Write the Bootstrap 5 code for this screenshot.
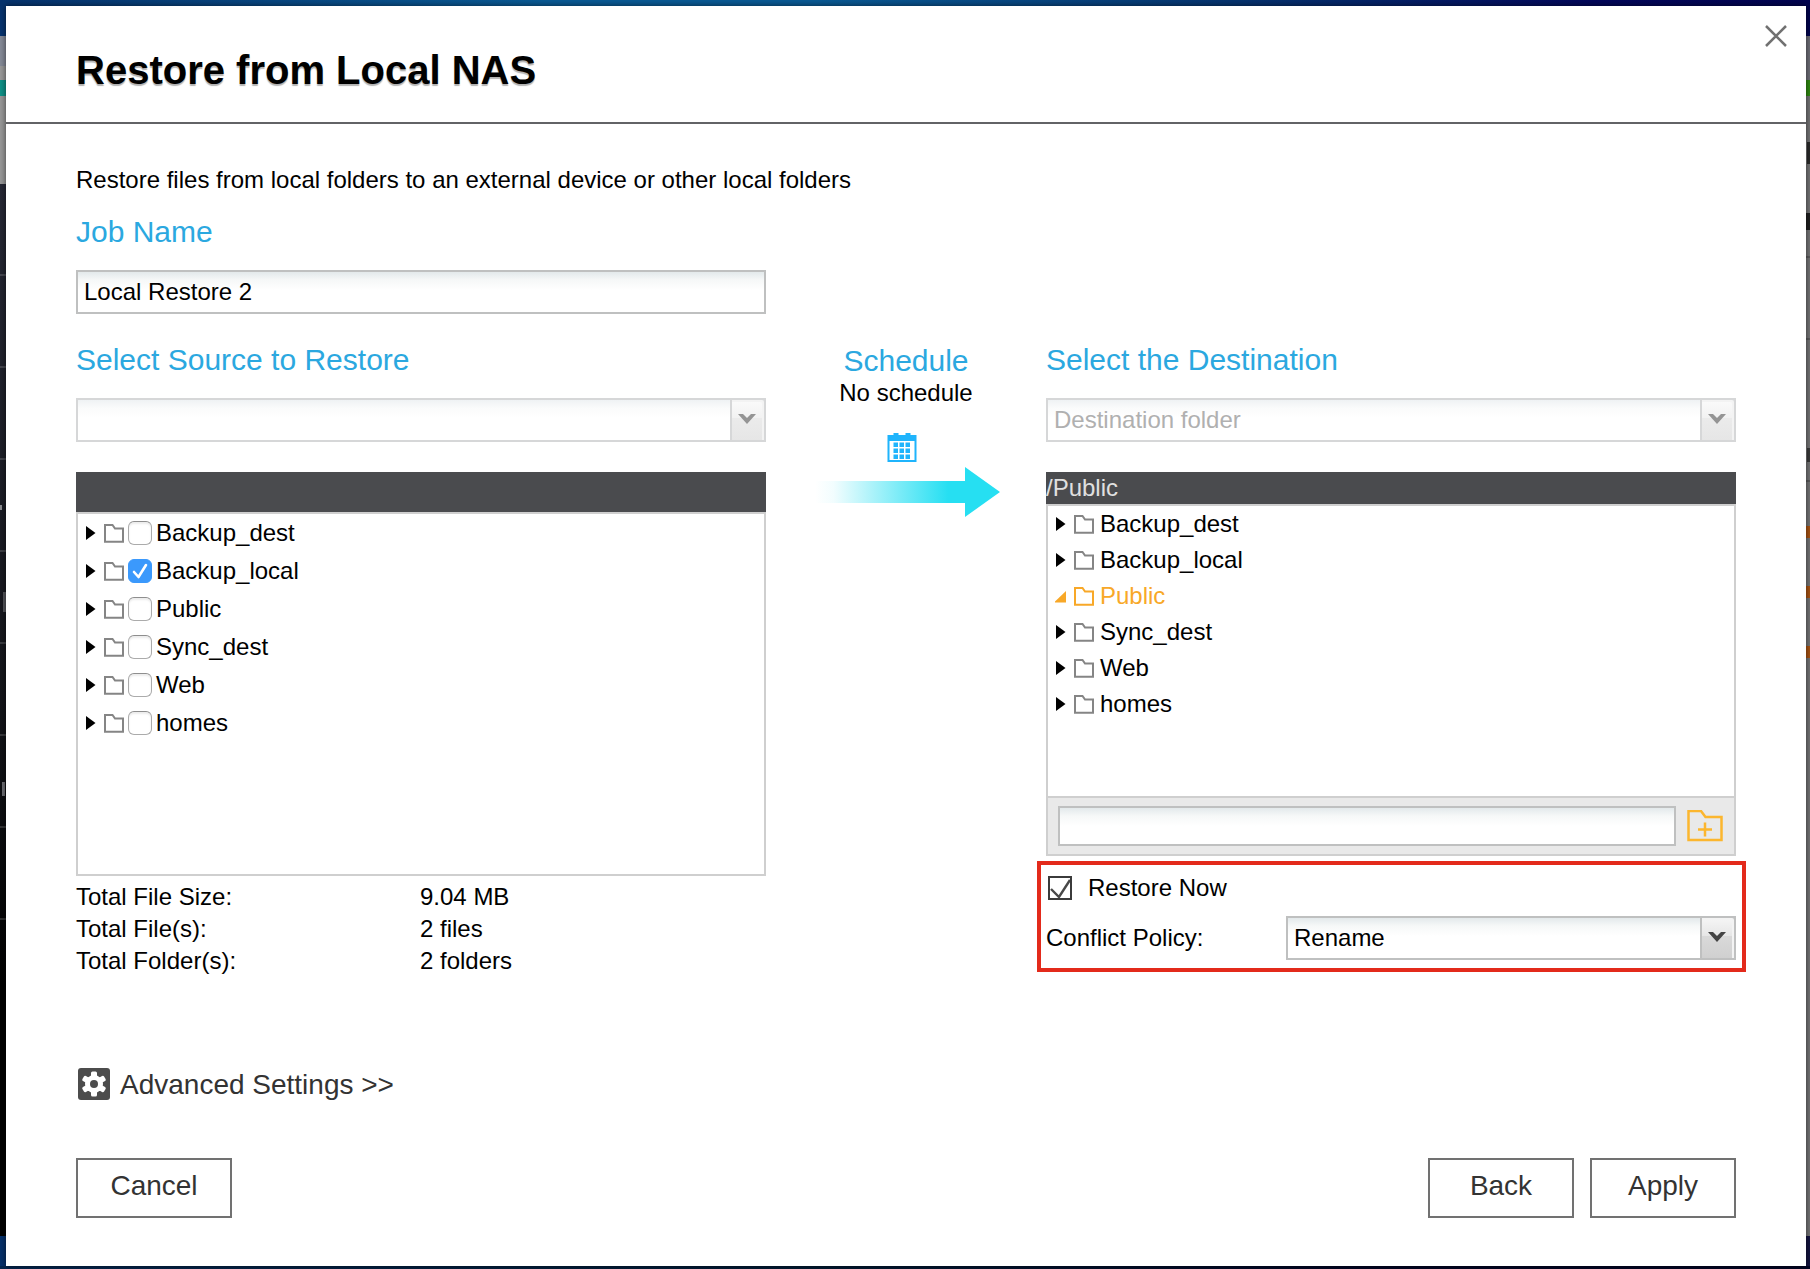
<!DOCTYPE html>
<html lang="en">
<head>
<meta charset="utf-8">
<meta name="viewport" content="width=device-width, initial-scale=1">
<title>Restore from Local NAS</title>
<link rel="stylesheet" href="https://cdn.jsdelivr.net/npm/bootstrap@5.3.0/dist/css/bootstrap.min.css">
<style>
  :root { --accent: #2ba8e0; --edge: #cfcfcf; --field-edge: #bfc0c0; --orange: #f8a828; }
  body {
    font-family: "Liberation Sans", Arial, sans-serif;
    font-size: 24px; line-height: 32px; color: #000;
    min-height: 100vh; padding: 6px 4px 3px 6px;
    background:
      linear-gradient(90deg, #06336d, #0a5a94 30%, #0a5a94 45%, #06346f 68%, #03075a 88%, #020450) top / 100% 6px no-repeat,
      linear-gradient(90deg, #05264f, #021a33 45%, #020524 75%) bottom / 100% 3px no-repeat,
      linear-gradient(#8a8b90, #8a8b90) left 0 top 505px / 2px 5px no-repeat,
      linear-gradient(#55565c, #55565c) left 3px top 592px / 3px 20px no-repeat,
      linear-gradient(#6d6e74, #6d6e74) left 2px top 782px / 3px 14px no-repeat,
      linear-gradient(#2a2a2a, #2a2a2a) right 0 top 142px / 3px 22px no-repeat,
      linear-gradient(#1f1f1f, #1f1f1f) right 0 top 213px / 4px 17px no-repeat,
      linear-gradient(#3a3a3a, #3a3a3a) right 0 top 448px / 3px 14px no-repeat,
      repeating-linear-gradient(transparent 0 90px, rgba(255,255,255,.16) 90px 92px) left 0 top 184px / 6px 740px no-repeat,
      linear-gradient(#07346f 0 36px, #858a97 36px 66px, #999 66px 80px, #0f9187 80px 96px, #979797 96px 184px, #262835 184px, #14151a 700px, #000 1000px 1236px, #06306a 1236px) left / 6px 100% no-repeat,
      linear-gradient(#02044e 0 36px, #6d6d76 36px 80px, #2f8a10 80px 96px, #747475 96px 256px, #5a5a5b 256px 258px, #747475 258px 338px, #5a5a5b 338px 340px, #747475 340px 480px, #5a5a5b 480px 482px, #747475 482px 526px, #a85312 526px 538px, #747475 538px 586px, #a85312 586px 598px, #747475 598px 646px, #a85312 646px 658px, #747475 658px 1236px, #14143f 1236px) right / 4px 100% no-repeat,
      #041c40;
  }
  .dialog { min-height: calc(100vh - 9px); background: #fff; box-shadow: 0 0 6px rgba(0,0,0,.6); }
  .dialog-head { padding: 42px 70px 30px; border-bottom: 2px solid #626366; }
  .dialog-title { font-size: 40px; line-height: 44px; font-weight: 700; margin: 0; text-shadow: 0 2px 1px rgba(0,0,0,.3); }
  .close-btn { top: 18px; right: 18px; width: 24px; height: 24px; line-height: 0; }
  .dialog-body { padding: 40px 70px 48px; }
  .job-row { padding-top: 18px; }
  .section-title { font-size: 30px; line-height: 36px; font-weight: 400; color: var(--accent); margin: 0 0 20px; display: block; }
  .side-col { flex: 69 1 0; min-width: 0; }
  .mid-col { flex: 28 0 0; padding-top: 3px; }
  .mid-col .section-title { line-height: 32px; margin: 0; }
  .field, .field:focus {
    font-size: 24px; line-height: 32px; height: 44px; padding: 4px 6px; color: #000;
    border: 2px solid var(--field-edge); border-radius: 0; box-shadow: none;
    background: linear-gradient(#e3e9eb, #f6f8f8 8px, #fff 18px);
  }
  .picker select { appearance: none; width: 100%; display: block; }
  .picker select:disabled { border-color: #d6d7d8; color: #b0b0b0; opacity: 1; background: linear-gradient(#eff2f4, #fafbfb 8px, #fff 18px); }
  .picker-arrow {
    top: 0; right: 0; bottom: 0; width: 36px; padding: 0 2px 3px 0; pointer-events: none;
    border: 2px solid var(--field-edge); border-top-right-radius: 4px; color: #444;
    background: linear-gradient(#f6f6f6, #e6e6e6 45%, #d9d9d9 46%, #d0d0d0);
    box-shadow: inset -2px 2px 0 #f3f3f3;
  }
  .picker.is-off .picker-arrow { border-color: #d6d7d8; color: #949494; background: linear-gradient(#fbfbfb, #f2f2f2 45%, #ebebeb 46%, #e6e6e6); }
  .path-bar { background: #4a4b4e; color: #e0e0e0; min-height: 32px; margin-top: 30px; }
  .path-bar.tall { min-height: 40px; }
  .tree { border: 2px solid var(--edge); padding: 0 7px; list-style: none; margin: 0; min-height: 364px; }
  .tree li { height: 38px; }
  .tree label { gap: 4px; }
  .tree label .twist { margin-right: 4px; }
  .tree.compact { min-height: 292px; border-bottom: 0; }
  .tree.compact li { height: 36px; }
  .tree.compact button { font-size: 24px; line-height: 32px; color: #000; }
  .tree.compact .twist { margin-right: 8px; }
  .tree.compact .folder { margin-right: 6px; }
  .tree.compact .picked { color: var(--orange); }
  .folder { color: #858585; }
  .picked .folder { color: var(--orange); }
  .mac-check { appearance: none; width: 24px; height: 24px; margin: 0; border: 1px solid #ababab; border-top-color: #8e8e8e; border-radius: 6px; background: #fff; box-shadow: inset 0 2px 2px #ececec; }
  .mac-check:checked { border-color: #3b99fc; box-shadow: none;
    background: #3b99fc url("data:image/svg+xml,%3Csvg xmlns='http://www.w3.org/2000/svg' viewBox='0 0 22 22'%3E%3Cpath d='M5 12l4.500 5L17 5' fill='none' stroke='white' stroke-width='2.600' stroke-linecap='round' stroke-linejoin='round'/%3E%3C/svg%3E"); }
  .new-folder { background: #e9e9e9; border: 2px solid var(--edge); padding: 8px 11px 8px 10px; gap: 11px; }
  .new-folder .field { height: 40px; }
  .totals { margin: 5px 0 0; }
  .totals dt { font-weight: 400; width: 344px; }
  .callout { border: 4px solid #e32a1b; margin: 5px -10px 0 -9px; padding: 7px 6px 8px 5px; }
  .flat-check { appearance: none; width: 24px; height: 24px; margin: 0 16px 0 2px; border: 2px solid #3b3b3b;
    background: #fff url("data:image/svg+xml,%3Csvg xmlns='http://www.w3.org/2000/svg' viewBox='0 0 20 20'%3E%3Cpath d='M1 11l8 8L20 2' fill='none' stroke='%23484848' stroke-width='2.400'/%3E%3C/svg%3E"); }
  .policy-row { margin-top: 12px; }
  .policy-row .picker { width: 450px; }
  .adv-link { font-size: 28px; line-height: 34px; color: #333; gap: 10px; padding-left: 2px; margin-top: 91px; }
  .adv-link:hover { color: #000; }
  .adv-link svg { margin-bottom: 2px; }
  .actions { gap: 16px; padding-top: 56px; }
  .box-btn { min-width: 146px; height: 60px; font-size: 28px; line-height: 32px; color: #333; background: #fff; border: 2px solid #717171; border-radius: 0; padding: 10px 32px 14px; }
  .box-btn.wide { min-width: 156px; }
  .box-btn:hover { background: #f0f0f0; }
</style>
<script src="https://cdn.jsdelivr.net/npm/bootstrap@5.3.0/dist/js/bootstrap.bundle.min.js"></script>
</head>
<body>
<svg width="0" height="0" class="position-absolute" aria-hidden="true">
  <symbol id="i-twist" viewBox="0 0 11 16"><path d="M1 1L10.500 8L1 15z" fill="#000"/></symbol>
  <symbol id="i-folder" viewBox="0 0 20 19"><path d="M1 17.800V1H8.500L11 4.600H19V17.800z" fill="none" stroke="currentColor" stroke-width="2"/></symbol>
  <symbol id="i-chev" viewBox="0 0 20 12"><path d="M1 1H6L10 5L14 1H19L10 11z" fill="currentColor"/></symbol>
</svg>
<main class="dialog d-flex flex-column position-relative">
  <header class="dialog-head">
    <h1 class="dialog-title">Restore from Local NAS</h1>
    <button type="button" class="close-btn btn p-0 border-0 position-absolute" aria-label="Close">
      <svg width="24" height="24" viewBox="0 0 24 24"><path d="M2 2L22 22M22 2L2 22" stroke="#717171" stroke-width="2.500"/></svg>
    </button>
  </header>
  <form class="dialog-body d-flex flex-column flex-grow-1">
    <p class="mb-0">Restore files from local folders to an external device or other local folders</p>
    <div class="job-row d-flex">
      <div class="side-col">
        <label class="section-title" for="job">Job Name</label>
        <input id="job" type="text" class="field form-control" value="Local Restore 2">
      </div>
      <div class="mid-col"></div>
      <div class="side-col"></div>
    </div>
    <div class="d-flex align-items-start pt-4 mt-1">
      <section class="side-col">
        <label class="section-title" for="src">Select Source to Restore</label>
        <div class="picker is-off position-relative">
          <select id="src" class="field" disabled><option></option></select>
          <span class="picker-arrow position-absolute d-flex align-items-center justify-content-center"><svg width="20" height="12"><use href="#i-chev"/></svg></span>
        </div>
        <div class="path-bar tall"></div>
        <ul class="tree">
          <li class="d-flex align-items-center"><label class="d-flex align-items-center"><svg class="twist" width="11" height="16"><use href="#i-twist"/></svg><svg class="folder" width="20" height="19"><use href="#i-folder"/></svg><input type="checkbox" class="mac-check"><span>Backup_dest</span></label></li>
          <li class="d-flex align-items-center"><label class="d-flex align-items-center"><svg class="twist" width="11" height="16"><use href="#i-twist"/></svg><svg class="folder" width="20" height="19"><use href="#i-folder"/></svg><input type="checkbox" class="mac-check" checked><span>Backup_local</span></label></li>
          <li class="d-flex align-items-center"><label class="d-flex align-items-center"><svg class="twist" width="11" height="16"><use href="#i-twist"/></svg><svg class="folder" width="20" height="19"><use href="#i-folder"/></svg><input type="checkbox" class="mac-check"><span>Public</span></label></li>
          <li class="d-flex align-items-center"><label class="d-flex align-items-center"><svg class="twist" width="11" height="16"><use href="#i-twist"/></svg><svg class="folder" width="20" height="19"><use href="#i-folder"/></svg><input type="checkbox" class="mac-check"><span>Sync_dest</span></label></li>
          <li class="d-flex align-items-center"><label class="d-flex align-items-center"><svg class="twist" width="11" height="16"><use href="#i-twist"/></svg><svg class="folder" width="20" height="19"><use href="#i-folder"/></svg><input type="checkbox" class="mac-check"><span>Web</span></label></li>
          <li class="d-flex align-items-center"><label class="d-flex align-items-center"><svg class="twist" width="11" height="16"><use href="#i-twist"/></svg><svg class="folder" width="20" height="19"><use href="#i-folder"/></svg><input type="checkbox" class="mac-check"><span>homes</span></label></li>
        </ul>
        <dl class="totals">
          <div class="d-flex"><dt>Total File Size:</dt><dd class="mb-0">9.04 MB</dd></div>
          <div class="d-flex"><dt>Total File(s):</dt><dd class="mb-0">2 files</dd></div>
          <div class="d-flex"><dt>Total Folder(s):</dt><dd class="mb-0">2 folders</dd></div>
        </dl>
      </section>
      <section class="mid-col text-center">
        <h2 class="section-title">Schedule</h2>
        <p class="mb-4">No schedule</p>
        <svg width="190" height="86" viewBox="-4 2 190 86" class="d-block mx-auto" role="img" aria-label="Set the schedule">
          <defs><linearGradient id="fade"><stop offset="0" stop-color="#26dff2" stop-opacity="0"/><stop offset=".1" stop-color="#26dff2" stop-opacity=".06"/><stop offset=".45" stop-color="#26dff2" stop-opacity=".6"/><stop offset=".72" stop-color="#26dff2"/></linearGradient></defs>
          <g fill="#1fb4fc">
            <path fill-rule="evenodd" d="M72.500 4H101.500V31H72.500zM74.500 10V29H99.500V10z"/>
            <path d="M78.500 2h5v4h-5zM90.500 2h5v4h-5z"/>
            <path d="M78.500 11.500h4.500v4.500h-4.500zM84.500 11.500h4.500v4.500h-4.500zM90.500 11.500h4.500v4.500h-4.500zM78.500 17.500h4.500v4.500h-4.500zM84.500 17.500h4.500v4.500h-4.500zM90.500 17.500h4.500v4.500h-4.500zM78.500 23.500h4.500v4.500h-4.500zM84.500 23.500h4.500v4.500h-4.500zM90.500 23.500h4.500v4.500h-4.500z"/>
          </g>
          <path d="M0 50H150V36L185 61L150 86V72H0z" fill="url(#fade)"/>
        </svg>
      </section>
      <section class="side-col">
        <label class="section-title" for="dst">Select the Destination</label>
        <div class="picker is-off position-relative">
          <select id="dst" class="field" disabled><option>Destination folder</option></select>
          <span class="picker-arrow position-absolute d-flex align-items-center justify-content-center"><svg width="20" height="12"><use href="#i-chev"/></svg></span>
        </div>
        <div class="path-bar">/Public</div>
        <ul class="tree compact">
          <li class="d-flex"><button type="button" class="btn p-0 border-0 d-flex align-items-center"><svg class="twist" width="11" height="16"><use href="#i-twist"/></svg><svg class="folder" width="20" height="19"><use href="#i-folder"/></svg>Backup_dest</button></li>
          <li class="d-flex"><button type="button" class="btn p-0 border-0 d-flex align-items-center"><svg class="twist" width="11" height="16"><use href="#i-twist"/></svg><svg class="folder" width="20" height="19"><use href="#i-folder"/></svg>Backup_local</button></li>
          <li class="d-flex"><button type="button" class="picked btn p-0 border-0 d-flex align-items-center"><svg class="twist" width="11" height="16" viewBox="0 0 11 16"><path d="M-1 14.500L11 3V14.500z" fill="#f8a828"/></svg><svg class="folder" width="20" height="19"><use href="#i-folder"/></svg>Public</button></li>
          <li class="d-flex"><button type="button" class="btn p-0 border-0 d-flex align-items-center"><svg class="twist" width="11" height="16"><use href="#i-twist"/></svg><svg class="folder" width="20" height="19"><use href="#i-folder"/></svg>Sync_dest</button></li>
          <li class="d-flex"><button type="button" class="btn p-0 border-0 d-flex align-items-center"><svg class="twist" width="11" height="16"><use href="#i-twist"/></svg><svg class="folder" width="20" height="19"><use href="#i-folder"/></svg>Web</button></li>
          <li class="d-flex"><button type="button" class="btn p-0 border-0 d-flex align-items-center"><svg class="twist" width="11" height="16"><use href="#i-twist"/></svg><svg class="folder" width="20" height="19"><use href="#i-folder"/></svg>homes</button></li>
        </ul>
        <div class="new-folder d-flex align-items-center">
          <input type="text" class="field form-control" aria-label="New folder name">
          <button type="button" class="btn p-0 border-0 d-flex" aria-label="Create folder">
            <svg width="36" height="32" viewBox="0 0 36 32"><path d="M1.500 30V1H14L18.500 7H34.500V30zM18 12.500V26.500M11 19.500H25" fill="none" stroke="#fcb62e" stroke-width="2.500"/></svg>
          </button>
        </div>
        <div class="callout">
          <label class="d-flex align-items-center"><input type="checkbox" class="flat-check" checked>Restore Now</label>
          <div class="policy-row d-flex align-items-center justify-content-between">
            <label for="policy">Conflict Policy:</label>
            <div class="picker position-relative">
              <select id="policy" class="field"><option>Rename</option></select>
              <span class="picker-arrow position-absolute d-flex align-items-center justify-content-center"><svg width="20" height="12"><use href="#i-chev"/></svg></span>
            </div>
          </div>
        </div>
      </section>
    </div>
    <a href="#" class="adv-link d-flex align-items-center align-self-start text-decoration-none">
      <svg width="32" height="32" viewBox="0 0 32 32"><rect width="32" height="32" rx="3" fill="#4c4c4c"/><g fill="#fff"><circle cx="16" cy="16" r="9"/><rect x="13" y="3.500" width="6" height="25" rx="1.500"/><rect x="13" y="3.500" width="6" height="25" rx="1.500" transform="rotate(60 16 16)"/><rect x="13" y="3.500" width="6" height="25" rx="1.500" transform="rotate(120 16 16)"/></g><circle cx="16" cy="16" r="4" fill="#4c4c4c"/></svg>
      Advanced Settings &gt;&gt;
    </a>
    <div class="actions d-flex mt-auto">
      <button type="button" class="box-btn wide btn me-auto">Cancel</button>
      <button type="button" class="box-btn btn">Back</button>
      <button type="submit" class="box-btn btn">Apply</button>
    </div>
  </form>
</main>
</body>
</html>
